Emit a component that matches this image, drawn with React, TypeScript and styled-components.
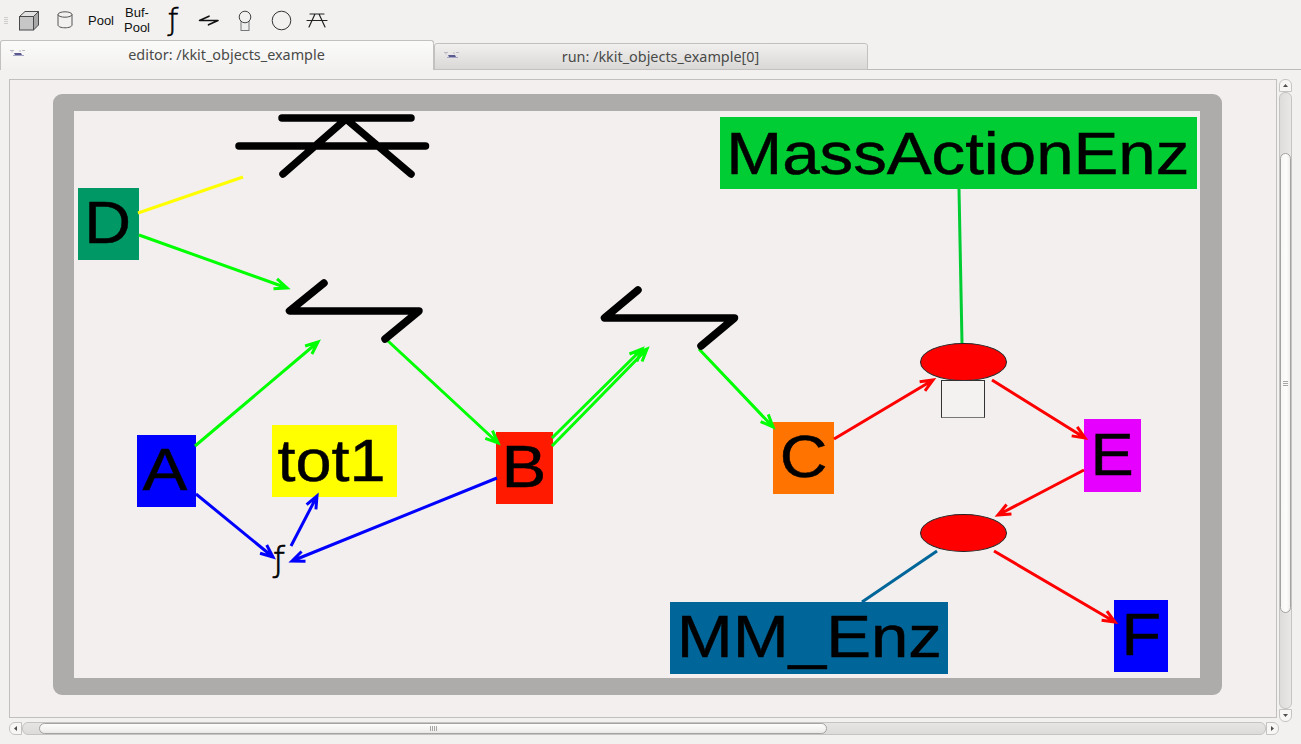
import React from "react";
import styled, { createGlobalStyle } from "styled-components";

const Global = createGlobalStyle`
  html, body { margin: 0; padding: 0; background: #f2f1f0; }
  body { width: 1301px; height: 744px; overflow: hidden; font-family: "Noto Sans", "Liberation Sans", sans-serif; }
`;

const Window = styled.div`
  width: 1301px; height: 744px; display: flex; flex-direction: column; background: #f2f1f0;
`;
const Toolbar = styled.div`
  height: 40px; display: flex; align-items: center; padding-left: 11px; position: relative; flex: none;
`;
const Grip = styled.div`
  width: 4px; height: 7px; margin-left: -7px; margin-right: 3px;
  background: repeating-linear-gradient(to bottom, #cfcdcb 0 1px, transparent 1px 2px);
`;
const ToolButton = styled.div`
  width: 36px; height: 40px; display: flex; align-items: center; justify-content: center;
  color: #111; font-family: "Liberation Sans", Arial, sans-serif; font-size: 13px; line-height: 15px; text-align: center; flex: none;
`;
const FuncGlyph = styled.span`
  font-family: "DejaVu Sans", sans-serif; font-weight: 200; font-size: ${p => p.$size}px; line-height: 1; color: #000;
  -webkit-text-stroke: 0.6px #000;
`;
const TabBar = styled.div`
  height: 30px; display: flex; align-items: flex-end; flex: none; position: relative;
  &::after { content: ""; position: absolute; left: 433px; right: 0; bottom: 0; height: 1px; background: #bdbbb9; }
`;
const Tab = styled.div`
  box-sizing: border-box; position: relative; z-index: 1; display: flex; align-items: center; justify-content: center;
  width: 434px; height: ${p => p.$active ? 30 : 27}px; padding: 0 0 ${p => p.$active ? 3 : 1}px 19px;
  border: 1px solid #c3c1bf; ${p => p.$active ? "border-bottom: none;" : ""}
  border-radius: 3px 3px 0 0; color: #4a4a48; font-size: 14.4px;
  background: ${p => p.$active ? "linear-gradient(#fbfbfa, #f2f1f0)" : "linear-gradient(#f1f0ef, #d9d8d7)"};
`;
const TabIcon = styled.div`
  position: absolute; left: 9px; top: ${p => p.$active ? 9 : 8}px; display: flex;
`;
const Body = styled.div`
  flex: 1; display: grid; grid-template-columns: 1268px 13px; grid-template-rows: 639px 13px;
  column-gap: 2px; row-gap: 4px; padding: 9px 0 0 9px; align-content: start;
`;
const Frame = styled.div`
  box-sizing: border-box; border: 1px solid #c2c0be; background: #f2efee; position: relative; overflow: hidden;
`;
const Compartment = styled.div`
  position: absolute; left: 43px; top: 14px; width: 1169px; height: 601px; box-sizing: border-box;
  border-style: solid; border-color: #aeacaa; border-width: 17px 22px 17px 21px; border-radius: 9px;
`;
const Node = styled.div`
  position: absolute; left: ${p => p.$x - 10}px; top: ${p => p.$y - 80}px;
  width: ${p => p.$w}px; height: ${p => p.$h}px; background: ${p => p.$bg};
  display: flex; align-items: center; justify-content: center; white-space: nowrap;
  font-family: "Liberation Sans", Arial, sans-serif; font-size: 60px; line-height: ${p => p.$h}px; color: #000;
`;
const NodeLabel = styled.span`
  display: inline-block; transform: translate(${p => p.$dx}px, ${p => p.$dy}px) scaleX(${p => p.$sx});
  -webkit-text-stroke: 0.5px #000;
`;
const Ellipse = styled.div`
  position: absolute; left: ${p => p.$x - 10}px; top: ${p => p.$y - 80}px; width: 87px; height: 38px;
  box-sizing: border-box; border: 1px solid #222; border-radius: 50%; background: #ff0000;
`;
const CplxBox = styled.div`
  position: absolute; left: 931px; top: 300px; width: 44px; height: 38px; box-sizing: border-box;
  border: 1px solid #333; border-bottom: 1px solid #777; background: #f4f2f1;
`;
const Func = styled.span`
  position: absolute; left: 263px; top: 459px; font-family: "DejaVu Sans", sans-serif; font-weight: 200; font-size: 34px; line-height: 40px; color: #000;
  -webkit-text-stroke: 0.7px #000;
`;
const Edges = styled.svg`
  position: absolute; left: -10px; top: -80px; pointer-events: none;
`;
const VBar = styled.div`
  display: flex; flex-direction: column; height: 643px; box-sizing: border-box; grid-row: 1 / span 2; grid-column: 2;
`;
const HBar = styled.div`
  display: flex; height: 13px; width: 1270px; grid-row: 2; grid-column: 1;
`;
const Stepper = styled.div`
  box-sizing: border-box; flex: none; background: #f7f6f5; border: 1px solid #c6c4c2;
  display: flex; align-items: center; justify-content: center;
  ${p => p.$v ? "height: 13px;" : "width: 13px;"}
  border-radius: ${p => ({ top: "6px 6px 0 0", bottom: "0 0 6px 6px", left: "6px 0 0 6px", right: "0 6px 6px 0" } as any)[p.$end]};
`;
const Trough = styled.div`
  flex: 1; display: flex; box-sizing: border-box; min-width: 0; min-height: 0;
  border: 1px solid #c6c4c2; border-radius: 6px;
  ${p => p.$v
    ? "flex-direction: column; padding: 60px 0 95px; background: linear-gradient(to right, #dddcdb, #e9e8e7);"
    : "padding: 0 438px 0 16px; background: linear-gradient(#e6e5e4, #dcdbda);"}
`;
const Thumb = styled.div`
  flex: 1; box-sizing: border-box; border: 1px solid #a5a3a1; border-radius: 6px; position: relative;
  background: ${p => p.$v ? "linear-gradient(to right, #f6f6f5, #fdfdfc 60%, #efeeed)" : "linear-gradient(#fdfdfc, #f2f1f0 70%, #e9e8e7)"};
  display: flex; align-items: center; justify-content: center;
`;
const Ridges = styled.div`
  ${p => p.$v ? "width: 5px; height: 5px; background: repeating-linear-gradient(to bottom, #a8a6a4 0 1px, transparent 1px 2px);"
    : "width: 7px; height: 5px; background: repeating-linear-gradient(to right, #a8a6a4 0 1px, transparent 1px 2px);"}
`;

const Caret = ({ d }: { d: string }) => <svg width="7" height="7" viewBox="0 0 7 7"><path d={d} fill="#4e4e4e" /></svg>;

const Moose = () => (
  <svg width="15" height="7" viewBox="0 0 15 7">
    <path d="M0 0.5h4M2 0.5v2M9 1h2M12 0.5h3" stroke="#b9b9c4" strokeWidth="1" fill="none" />
    <path d="M4 3h7l1 2H5z" fill="#5a5a90" />
    <path d="M3 5.5h11" stroke="#a3a3c4" strokeWidth="1" />
  </svg>
);

type Pt = [number, number];
const head = (from: Pt, to: Pt, len = 13.5, ang = 0.4) => {
  const a = Math.atan2(from[1] - to[1], from[0] - to[0]);
  const p = (s: number): Pt => [to[0] + len * Math.cos(a + s * ang), to[1] + len * Math.sin(a + s * ang)];
  const [l, r] = [p(1), p(-1)];
  return `M${l[0]} ${l[1]}L${to[0]} ${to[1]}L${r[0]} ${r[1]}`;
};

const arrows: { c: string; a: Pt; b: Pt }[] = [
  { c: "#00ff00", a: [139, 235], b: [287, 288] },
  { c: "#00ff00", a: [195, 446], b: [318, 342] },
  { c: "#00ff00", a: [388, 341], b: [498, 443] },
  { c: "#00ff00", a: [552, 438], b: [642, 349] },
  { c: "#00ff00", a: [552, 446], b: [647, 349] },
  { c: "#00ff00", a: [699, 349], b: [773, 427] },
  { c: "#0000ff", a: [196, 494], b: [273, 557] },
  { c: "#0000ff", a: [291, 546], b: [317, 496] },
  { c: "#0000ff", a: [497, 478], b: [292, 561] },
  { c: "#ff0000", a: [834, 439], b: [933, 380] },
  { c: "#ff0000", a: [992, 380], b: [1085, 438] },
  { c: "#ff0000", a: [1084, 470], b: [998, 515] },
  { c: "#ff0000", a: [994, 551], b: [1115, 622] },
];

const nodes = [
  { t: "D", x: 78, y: 188, w: 61, h: 72, bg: "#009966", sx: 1.08, dx: -1, dy: -1 },
  { t: "A", x: 137, y: 435, w: 59, h: 72, bg: "#0000ff", sx: 1.12, dx: -1, dy: -1 },
  { t: "tot1", x: 272, y: 425, w: 125, h: 72, bg: "#ffff00", sx: 1.08, dx: -2.5, dy: 0 },
  { t: "B", x: 496, y: 432, w: 57, h: 72, bg: "#ff1a00", sx: 1.12, dx: 0, dy: -1 },
  { t: "C", x: 773, y: 422, w: 61, h: 72, bg: "#ff7300", sx: 1.1, dx: 0, dy: -1 },
  { t: "E", x: 1084, y: 419, w: 57, h: 73, bg: "#e600ff", sx: 1.08, dx: 0, dy: -1 },
  { t: "F", x: 1114, y: 600, w: 54, h: 72, bg: "#0000ff", sx: 1.08, dx: 0, dy: -1 },
  { t: "MM_Enz", x: 670, y: 602, w: 278, h: 72, bg: "#006699", sx: 1.12, dx: 0, dy: -1 },
  { t: "MassActionEnz", x: 720, y: 117, w: 477, h: 72, bg: "#00cc33", sx: 1.12, dx: -1, dy: 0.5 },
];

export default function App() {
  return (
    <Window>
      <Global />
      <Toolbar>
        <Grip />
        <ToolButton>
          <svg width="22" height="21" viewBox="0 0 22 21">
            <path d="M1.5 6.5L7 1.5H20.5L15.5 6.5z" fill="#e2e2e2" stroke="#4a4a4a" strokeLinejoin="round" />
            <path d="M15.5 6.5L20.5 1.5V15L15.5 20z" fill="#a8a8a8" stroke="#4a4a4a" strokeLinejoin="round" />
            <rect x="1.5" y="6.5" width="14" height="13.5" fill="#c6c6c6" stroke="#4a4a4a" />
          </svg>
        </ToolButton>
        <ToolButton>
          <svg width="16" height="18" viewBox="0 0 16 18">
            <ellipse cx="8" cy="3.5" rx="7" ry="2.7" fill="none" stroke="#555" />
            <path d="M1 3.5V14c0 1.6 3 2.8 7 2.8s7-1.2 7-2.8V3.5" fill="none" stroke="#555" />
          </svg>
        </ToolButton>
        <ToolButton>Pool</ToolButton>
        <ToolButton>Buf-<br />Pool</ToolButton>
        <ToolButton><FuncGlyph $size={30}>ƒ</FuncGlyph></ToolButton>
        <ToolButton>
          <svg width="22" height="11" viewBox="0 0 22 11">
            <path d="M11 1.2L1.5 5.5H20L10.5 9.8" fill="none" stroke="#111" strokeWidth="1.6" strokeLinecap="round" strokeLinejoin="round" />
          </svg>
        </ToolButton>
        <ToolButton>
          <svg width="14" height="21" viewBox="0 0 14 21">
            <rect x="3" y="11" width="8" height="9.5" fill="#eee" stroke="#777" />
            <circle cx="7" cy="7" r="5.8" fill="#f2f1f0" stroke="#444" />
          </svg>
        </ToolButton>
        <ToolButton>
          <svg width="21" height="21" viewBox="0 0 21 21">
            <circle cx="10.5" cy="10.5" r="9.3" fill="none" stroke="#333" />
          </svg>
        </ToolButton>
        <ToolButton>
          <svg width="22" height="16" viewBox="0 0 22 16">
            <path d="M4 2H18M1 8.5H21M3 15L9 2M19 15L13 2" fill="none" stroke="#222" strokeWidth="1.2" strokeLinecap="round" />
          </svg>
        </ToolButton>
      </Toolbar>
      <TabBar>
        <Tab $active><TabIcon $active><Moose /></TabIcon>editor: /kkit_objects_example</Tab>
        <Tab><TabIcon><Moose /></TabIcon>run: /kkit_objects_example[0]</Tab>
      </TabBar>
      <Body>
        <Frame>
          <Compartment />
          {nodes.map(n => <Node key={n.t} $x={n.x} $y={n.y} $w={n.w} $h={n.h} $bg={n.bg}><NodeLabel $sx={n.sx} $dx={n.dx} $dy={n.dy}>{n.t}</NodeLabel></Node>)}
          <Ellipse $x={920} $y={343} />
          <CplxBox />
          <Ellipse $x={920} $y={514} />
          <Func>ƒ</Func>
          <Edges width="1301" height="744" viewBox="0 0 1301 744" fill="none" strokeWidth="3">
            <path d="M138 213L243 177" stroke="#ffff00" />
            <path d="M959 189L962 343" stroke="#00cc33" />
            <path d="M937 551L862 602" stroke="#006699" />
            {arrows.map((e, i) => (
              <path key={i} d={`M${e.a[0]} ${e.a[1]}L${e.b[0]} ${e.b[1]}${head(e.a, e.b)}`} stroke={e.c} />
            ))}
            <g stroke="#000" strokeWidth="7.5" strokeLinecap="round" strokeLinejoin="round">
              <path d="M282 118H411M239 146H425.5M283 174L346 119L411 174" />
              <path d="M324 283L289.5 311H419L385 339" />
              <path d="M638 290L604.5 318H734.5L701 346" />
            </g>
          </Edges>
        </Frame>
        <VBar>
          <Stepper $v $end="top"><Caret d="M3.5 2L6 5H1z" /></Stepper>
          <Trough $v><Thumb $v><Ridges $v /></Thumb></Trough>
          <Stepper $v $end="bottom"><Caret d="M1 2H6L3.5 5z" /></Stepper>
        </VBar>
        <HBar>
          <Stepper $end="left"><Caret d="M2 3.5L5 1V6z" /></Stepper>
          <Trough><Thumb><Ridges /></Thumb></Trough>
          <Stepper $end="right"><Caret d="M2 1L5 3.5L2 6z" /></Stepper>
        </HBar>
      </Body>
    </Window>
  );
}
